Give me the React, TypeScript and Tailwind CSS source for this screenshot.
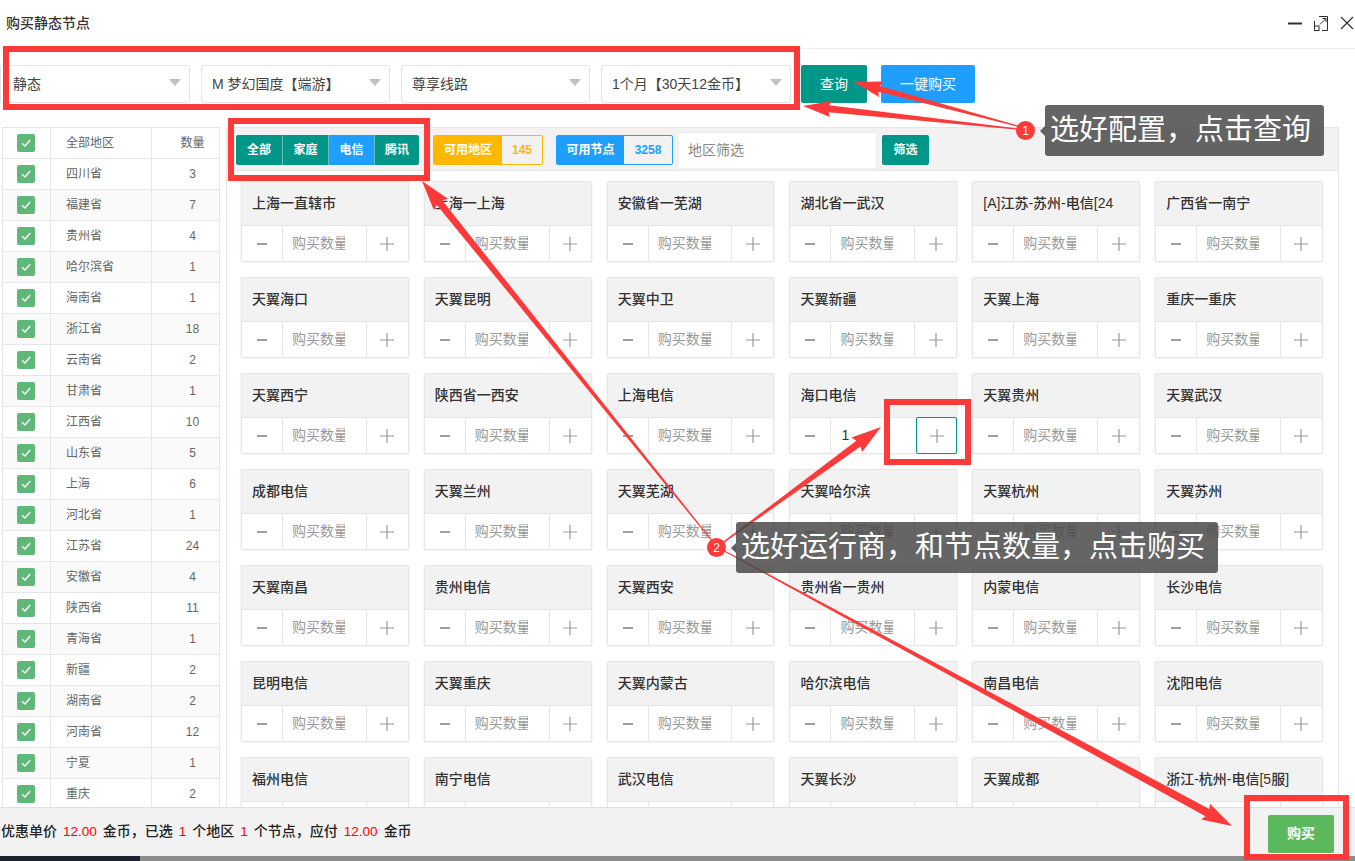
const FONT = "font-['Liberation_Sans','Noto_Sans_CJK_SC',sans-serif]";

const regions: [string, number][] = [
  ["四川省", 3], ["福建省", 7], ["贵州省", 4], ["哈尔滨省", 1], ["海南省", 1], ["浙江省", 18], ["云南省", 2],
  ["甘肃省", 1], ["江西省", 10], ["山东省", 5], ["上海", 6], ["河北省", 1], ["江苏省", 24], ["安徽省", 4],
  ["陕西省", 11], ["青海省", 1], ["新疆", 2], ["湖南省", 2], ["河南省", 12], ["宁夏", 1], ["重庆", 2],
];

const nodes = [
  "上海一直辖市", "上海一上海", "安徽省一芜湖", "湖北省一武汉", "[A]江苏-苏州-电信[24", "广西省一南宁",
  "天翼海口", "天翼昆明", "天翼中卫", "天翼新疆", "天翼上海", "重庆一重庆",
  "天翼西宁", "陕西省一西安", "上海电信", "海口电信", "天翼贵州", "天翼武汉",
  "成都电信", "天翼兰州", "天翼芜湖", "天翼哈尔滨", "天翼杭州", "天翼苏州",
  "天翼南昌", "贵州电信", "天翼西安", "贵州省一贵州", "内蒙电信", "长沙电信",
  "昆明电信", "天翼重庆", "天翼内蒙古", "哈尔滨电信", "南昌电信", "沈阳电信",
  "福州电信", "南宁电信", "武汉电信", "天翼长沙", "天翼成都", "浙江-杭州-电信[5服]",
];

const Check = () => (
  <span className="flex h-[18px] w-[18px] items-center justify-center rounded-[2px] bg-[#5fb878]">
    <svg width="12" height="12" viewBox="0 0 12 12" fill="none" stroke="#fff" strokeWidth="1.4">
      <path d="M2 6.2 L5 9 L10.2 3" />
    </svg>
  </span>
);

const Select = ({ label, width }: { label: string; width: string }) => (
  <div className={`flex h-[38px] items-center justify-between rounded-[2px] border border-[#e6e6e6] bg-white pr-[8px] text-[14px] text-[#444] ${width}`}>
    <span className="whitespace-nowrap">{label}</span>
    <span className="mb-[4px] h-0 w-0 border-x-[6px] border-t-[7px] border-x-transparent border-t-[#c2c2c2]" />
  </div>
);

const Card = ({ name }: { name: string }) => {
  const active = name === "海口电信";
  return (
    <div className="h-[80px] rounded-[2px] shadow-[0_1px_2px_rgba(0,0,0,0.12)]">
      <div className="flex h-[44px] items-center whitespace-nowrap rounded-t-[2px] border border-b-0 border-[#e6e6e6] bg-[#f2f2f2] pl-[10px] text-[14px] font-medium text-[#333]">
        {name}
      </div>
      <div className="flex h-[37px] border border-[#e6e6e6] bg-white">
        <div className="flex w-[41px] shrink-0 items-center justify-center border-r border-[#e6e6e6] text-[#777]">
          <svg width="12" height="12" viewBox="0 0 12 12"><path d="M1 6 H11" stroke="#888" strokeWidth="1.6" /></svg>
        </div>
        {active ? (
          <div className="flex min-w-0 flex-1 items-center pl-[10px] text-[14px] text-[#333]">1</div>
        ) : (
          <div className="flex min-w-0 flex-1 items-center border-r border-[#e6e6e6] pl-[9px]">
            <span className="w-[53px] overflow-hidden whitespace-nowrap text-[14px] text-[#999]">购买数量</span>
          </div>
        )}
        <div className={`flex w-[41px] shrink-0 items-center justify-center ${active ? "-my-px -mr-px rounded-[2px] border border-[#009688]" : ""}`}>
          <svg width="16" height="16" viewBox="0 0 16 16"><path d="M1 8 H15 M8 1 V15" stroke="#999" strokeWidth="1.2" /></svg>
        </div>
      </div>
    </div>
  );
};

// tapered annotation arrow, thin at the badge and wide at the tip
const Arrow = ({ x1, y1, x2, y2, w = 6, head = 18, len = 24 }: { x1: number; y1: number; x2: number; y2: number; w?: number; head?: number; len?: number }) => {
  const d = Math.hypot(x2 - x1, y2 - y1);
  const ux = (x2 - x1) / d;
  const uy = (y2 - y1) / d;
  const nx = -uy;
  const ny = ux;
  const bx = x2 - ux * len;
  const by = y2 - uy * len;
  const p = (x: number, y: number) => `${x.toFixed(1)},${y.toFixed(1)}`;
  const points = [
    p(x1 + nx * 0.5, y1 + ny * 0.5),
    p(bx + nx * (w / 2) - ux * 4, by + ny * (w / 2) - uy * 4),
    p(bx + nx * (head / 2) - ux * 6, by + ny * (head / 2) - uy * 6),
    p(x2, y2),
    p(bx - nx * (head / 2) - ux * 6, by - ny * (head / 2) - uy * 6),
    p(bx - nx * (w / 2) - ux * 4, by - ny * (w / 2) - uy * 4),
    p(x1 - nx * 0.5, y1 - ny * 0.5),
  ].join(" ");
  return <polygon points={points} fill="#fd3a3a" />;
};

const Badge = ({ n, className }: { n: number; className: string }) => (
  <span className={`absolute flex h-[19px] w-[19px] items-center justify-center rounded-full bg-[#fd3a3a] text-[12px] text-white ${className}`}>{n}</span>
);

const Tip = ({ text, className }: { text: string; className: string }) => (
  <div className={`absolute flex h-[51px] items-center whitespace-nowrap rounded-[3px] bg-[rgba(70,70,70,0.83)] pl-[5px] text-[29px] text-white ${className}`}>
    <span className="absolute left-[-5px] top-[21px] h-0 w-0 border-y-[5px] border-r-[5px] border-y-transparent border-r-[#5f5f5f]" />
    {text}
  </div>
);

const Mark = ({ className }: { className: string }) => (
  <div className={`absolute border-[6px] border-[#fd3a3a] ${className}`} />
);

const Money = ({ children }: { children: string }) => (
  <span className="mx-[6px] text-[13.5px] text-[#f00]">{children}</span>
);

export default function App() {
  return (
    <div className={`relative flex h-[861px] w-[1355px] flex-col overflow-hidden bg-white ${FONT}`}>
      <div className="flex h-[49px] shrink-0 items-center justify-between border-b border-[#eee] pl-[6px] pb-[2px]">
        <span className="text-[14px] font-medium text-[#333]">购买静态节点</span>
        <div className="flex items-center gap-[12px] pr-[1px]">
          <svg width="14" height="14" viewBox="0 0 14 14"><path d="M0 7.5 H14" stroke="#2f2f2f" strokeWidth="2" /></svg>
          <svg width="14" height="15" viewBox="0 0 14 15" fill="none" stroke="#2f2f2f" strokeWidth="1">
            <path d="M5 .5 H13.5 V14.5 H8 M.5 10 V5" />
            <rect x=".5" y="10" width="4.5" height="4.5" />
            <path d="M6 8.5 L12 2.5 M8.5 2.5 H12 V6" />
          </svg>
          <svg width="14" height="14" viewBox="0 0 14 14"><path d="M1 1 L13 13 M13 1 L1 13" stroke="#2f2f2f" strokeWidth="1.2" /></svg>
        </div>
      </div>

      <div className="min-h-0 flex-1 overflow-hidden">
        <div className="mt-[16px] flex h-[38px] items-center">
          <Select label="静态" width="w-[190px] pl-[12px]" />
          <div className="w-[11px]" />
          <Select label="M 梦幻国度【端游】" width="w-[189px] pl-[10px]" />
          <div className="w-[11px]" />
          <Select label="尊享线路" width="w-[189px] pl-[10px]" />
          <div className="w-[11px]" />
          <Select label="1个月【30天12金币】" width="w-[190px] pl-[10px]" />
          <button className="ml-[10px] h-[38px] w-[66px] rounded-[2px] bg-[#009688] text-[14px] text-white">查询</button>
          <button className="ml-[14px] h-[38px] w-[94px] rounded-[2px] bg-[#1e9fff] text-[14px] text-white">一键购买</button>
        </div>

        <div className="mt-[24px] flex gap-[6px] pl-[2px]">
          <div className="w-[218px] shrink-0 border-l border-t border-r border-[#e6e6e6] text-[12px] text-[#666]">
            <div className="flex h-[31px] border-b border-[#e6e6e6]">
              <div className="flex w-[48px] items-center justify-center border-r border-[#e6e6e6] pr-[2px]"><Check /></div>
              <div className="flex w-[101px] items-center border-r border-[#e6e6e6] pl-[15px]">全部地区</div>
              <div className="flex flex-1 items-center justify-center pl-[14px]">数量</div>
            </div>
            {regions.map(([name, count], i) => (
              <div key={name} className={`flex h-[31px] border-b border-[#e6e6e6] ${i % 2 === 1 ? "bg-[#fafafa]" : "bg-white"}`}>
                <div className="flex w-[48px] items-center justify-center border-r border-[#e6e6e6] pr-[2px]"><Check /></div>
                <div className="flex w-[101px] items-center border-r border-[#e6e6e6] pl-[15px]">{name}</div>
                <div className="flex flex-1 items-center justify-center pl-[14px]">{count}</div>
              </div>
            ))}
          </div>

          <div className="w-[1113px] shrink-0 border border-[#e6e6e6]">
            <div className="flex h-[43px] items-center border-b border-[#e6e6e6] bg-[#f2f2f2] pl-[9px] pt-[2px]">
              <div className="flex h-[30px] overflow-hidden rounded-[2px] text-[12px] font-bold text-white">
                <span className="flex w-[46px] items-center justify-center bg-[#009688]">全部</span>
                <span className="flex w-[46px] items-center justify-center border-l border-[#6cc0b8] bg-[#009688]">家庭</span>
                <span className="flex w-[46px] items-center justify-center border-l border-[#6cc0b8] bg-[#1e9fff]">电信</span>
                <span className="flex w-[45px] items-center justify-center border-l border-[#6cc0b8] bg-[#009688]">腾讯</span>
              </div>
              <div className="ml-[14px] flex h-[30px] w-[110px] overflow-hidden rounded-[2px] border border-[#ffb800] text-[12px] font-bold">
                <span className="flex w-[68px] items-center justify-center bg-[#ffb800] text-white">可用地区</span>
                <span className="flex flex-1 items-center justify-center text-[#ffb800]">145</span>
              </div>
              <div className="ml-[13px] flex h-[30px] w-[117px] overflow-hidden rounded-[2px] border border-[#1e9fff] text-[12px] font-bold">
                <span className="flex w-[67px] items-center justify-center bg-[#1e9fff] text-white">可用节点</span>
                <span className="flex flex-1 items-center justify-center text-[#1e9fff]">3258</span>
              </div>
              <div className="ml-[5px] flex h-[37px] w-[199px] items-center rounded-[2px] border border-[#eee] bg-white pl-[9px] text-[14px] text-[#888]">地区筛选</div>
              <button className="ml-[5px] h-[30px] w-[47px] rounded-[2px] bg-[#009688] text-[12px] font-bold text-white">筛选</button>
            </div>
            <div className="grid grid-cols-6 gap-x-[15px] gap-y-[16px] pl-[14px] pr-[15px] pt-[10px]">
              {nodes.map((n) => <Card key={n} name={n} />)}
            </div>
          </div>
        </div>
      </div>

      <div className="flex h-[49px] shrink-0 items-center justify-between border-t border-[#e0e0e0] bg-[#f2f2f2] pl-[1px] pr-[21px]">
        <div className="whitespace-nowrap text-[14px] font-medium text-[#222]">
          优惠单价<Money>12.00</Money>金币，已选<Money>1</Money>个地区<Money>1</Money>个节点，应付<Money>12.00</Money>金币
        </div>
        <button className="mt-[3px] h-[38px] w-[66px] rounded-[2px] bg-[#5cb85c] text-[14px] font-bold text-white">购买</button>
      </div>
      <div className="flex h-[5px] shrink-0 bg-[#8c8c8c]">
        <div className="w-[140px] bg-[#1f2330]" />
      </div>

      <svg className="pointer-events-none absolute inset-0" width="1355" height="861">
        <Arrow x1={1025} y1={128} x2={854} y2={82} w={6} head={16} len={22} />
        <Arrow x1={1025} y1={130} x2={803} y2={106} w={7} head={16} len={22} />
        <Arrow x1={717} y1={547} x2={422} y2={181} w={7} />
        <Arrow x1={717} y1={547} x2={881} y2={427} w={7} />
        <Arrow x1={717} y1={547} x2={1232} y2={826} w={8} />
      </svg>

      <Mark className="left-[3px] top-[46px] h-[64px] w-[797px]" />
      <Mark className="left-[228px] top-[118px] h-[63px] w-[202px]" />
      <Mark className="left-[884px] top-[399px] h-[66px] w-[87px]" />
      <Mark className="left-[1244px] top-[795px] h-[65px] w-[105px]" />

      <Badge n={1} className="left-[1016px] top-[121px]" />
      <Tip text="选好配置，点击查询" className="left-[1045px] top-[105px] w-[279px]" />
      <Badge n={2} className="left-[707px] top-[538px]" />
      <Tip text="选好运行商，和节点数量，点击购买" className="left-[736px] top-[522px] w-[482px]" />
    </div>
  );
}
